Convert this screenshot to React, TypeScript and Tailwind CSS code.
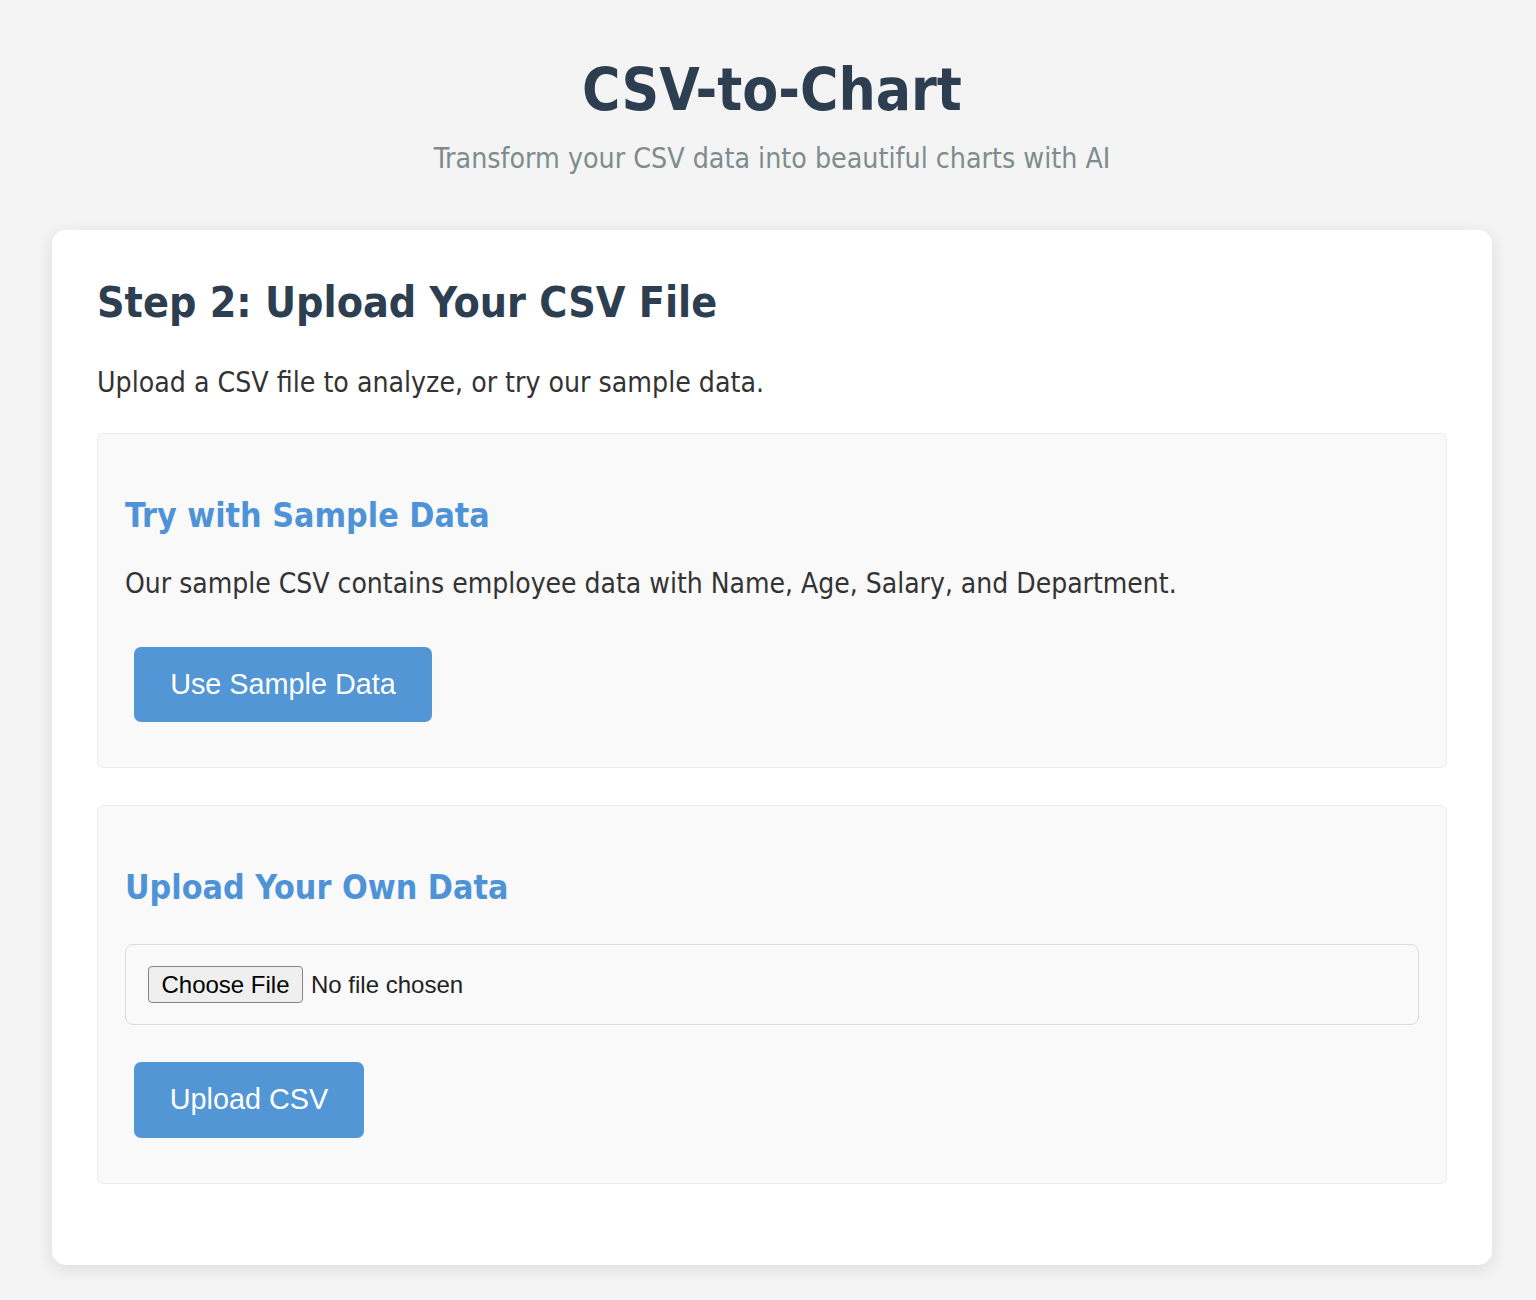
import { useState } from "react"

const tahoma = { fontFamily: '"DejaVu Sans Condensed", "DejaVu Sans", sans-serif' }

const App = () => {
  const [fileName, setFileName] = useState<string | null>(null)

  return (
    <div
      className="min-h-[1300px] bg-[#f4f4f4] text-[#333]"
      style={tahoma}
    >
      <div className="ml-[52px] flex w-[1440px] flex-col">
        <h1 className="mt-[56px] text-center text-[58.2px] leading-[69px] font-bold text-[#2c3e50]">
          CSV-to-Chart
        </h1>
        <p className="mt-[17px] text-center text-[28.3px] leading-[34px] text-[#7f8c8d]">
          Transform your CSV data into beautiful charts with AI
        </p>

        <div className="mt-[54px] flex flex-col rounded-[14px] bg-white px-[45px] pt-[46px] pb-[81px] shadow-[0_4px_18px_rgba(0,0,0,0.1)]">
          <h2 className="text-[42.6px] leading-[52px] font-bold text-[#2c3e50]">
            Step 2: Upload Your CSV File
          </h2>
          <p className="mt-[37px] text-[28.2px] leading-[35px]">
            Upload a CSV file to analyze, or try our sample data.
          </p>

          <div className="mt-[33px] flex flex-col rounded-[6px] border border-[#eaeaea] bg-[#f9f9f9] px-[27px] pt-[62px] pb-[45px]">
            <h3 className="text-[33.7px] leading-[40px] font-bold text-[#4e93d7]">
              Try with Sample Data
            </h3>
            <p className="mt-[30px] text-[28px] leading-[35px]">
              Our sample CSV contains employee data with Name, Age, Salary, and
              Department.
            </p>
            <button className="mt-[46px] ml-[9px] flex h-[75px] w-[298px] items-center justify-center rounded-[7px] bg-[#5296d5] font-['Liberation_Sans',Arial,sans-serif] text-[28.8px] text-white">
              Use Sample Data
            </button>
          </div>

          <div className="mt-[37px] flex flex-col rounded-[6px] border border-[#eaeaea] bg-[#f9f9f9] px-[27px] pt-[62px] pb-[45px]">
            <h3 className="text-[33.7px] leading-[40px] font-bold text-[#4e93d7]">
              Upload Your Own Data
            </h3>
            <label className="mt-[36px] flex h-[81px] cursor-pointer items-center rounded-[8px] border border-[#dcdcdc] px-[22px] font-['Liberation_Sans',Arial,sans-serif] text-[24px]">
              <input
                type="file"
                accept=".csv"
                className="hidden"
                onChange={(e) => setFileName(e.target.files?.[0]?.name ?? null)}
              />
              <span className="flex h-[37px] w-[155px] items-center justify-center rounded-[4px] border border-[#858585] bg-[#efefef] text-black">
                Choose File
              </span>
              <span className="ml-[8px] text-[#222]">
                {fileName ?? "No file chosen"}
              </span>
            </label>
            <button className="mt-[37px] ml-[9px] flex h-[76px] w-[230px] items-center justify-center rounded-[7px] bg-[#5296d5] font-['Liberation_Sans',Arial,sans-serif] text-[28.8px] text-white">
              Upload CSV
            </button>
          </div>
        </div>
      </div>
    </div>
  )
}

export default App
